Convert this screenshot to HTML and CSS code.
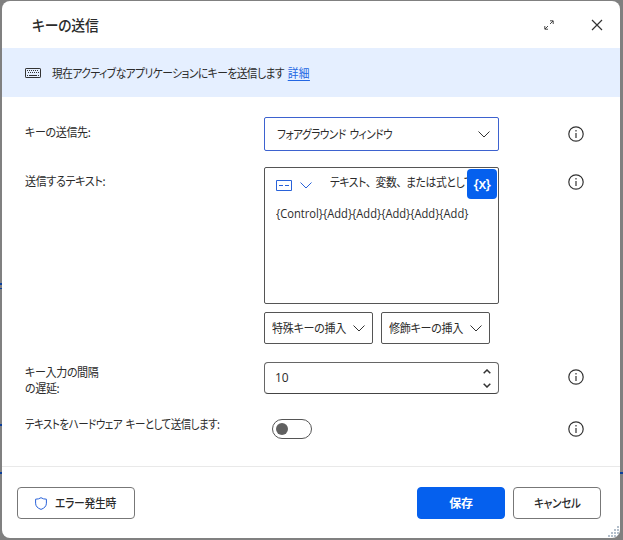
FILE: index.html
```html
<!DOCTYPE html>
<html lang="ja">

<head>
    <meta charset="utf-8">
    <title>キーの送信</title>
    <meta name="viewport" content="width=device-width, initial-scale=1">
    <link rel="stylesheet" href="styles.css">
</head>

<body>
    <!-- bits of the designer behind the dialog -->
    <i class="behind b1"></i>
    <i class="behind b2"></i>
    <i class="behind b3"></i>
    <i class="behind b4"></i>
    <i class="behind b5"></i>

    <div class="dialog">
        <header class="titlebar">
            <h1>キーの送信</h1>
            <svg class="expand" width="10" height="10" viewBox="0 0 10 10"><path d="M6 .8h3.2V4M9 1 6 4M.8 6v3.2H4M1 9l3-3"/></svg>
            <svg class="close" width="12" height="12" viewBox="0 0 12 12"><path d="M1 1l10 10M11 1 1 11"/></svg>
        </header>

        <div class="banner">
            <svg width="16" height="10" viewBox="0 0 16 10"><rect x=".5" y=".5" width="15" height="9" rx=".6"/><path d="M2 2.5h12M3 4.5h11" stroke-dasharray="1 1"/><path d="M2 7.5h1M4 7.5h8M13 7.5h1"/></svg>
            <p>現在アクティブなアプリケーションにキーを送信します<a href="#">詳細</a></p>
        </div>

        <main>
            <div class="row row-target">
                <label class="l-target">キーの送信先:</label>
                <div class="select">
                    <span>フォアグラウンド <span class="word">ウィンドウ</span></span>
                    <svg class="chev" width="12" height="7" viewBox="0 0 12 7"><path d="M.5.5 6 6 11.5.5"/></svg>
                </div>
                <svg class="info" width="16" height="16" viewBox="0 0 16 16"><circle cx="8" cy="8" r="7.2"/><path d="M8 4v1.6M8 7v5"/></svg>
            </div>

            <div class="row row-text">
                <label class="l-text">送信するテキスト:</label>
                <div>
                    <div class="textbox">
                        <div class="tools">
                            <svg width="16" height="11" viewBox="0 0 16 11"><path d="M.5.5h15v10H.5zM3 5.5h4M9 5.5h4"/></svg>
                            <svg class="tool-chev" width="12" height="7" viewBox="0 0 12 7"><path d="M.5.5 6 6 11.5.5"/></svg>
                            <div class="hint"><span>テキスト<b>、</b>変数<b>、</b>または式として</span></div>
                            <button class="var">{x}</button>
                        </div>
                        <p class="value">{Control}{Add}{Add}{Add}{Add}{Add}</p>
                    </div>
                    <div class="inserts">
                        <button><span>特殊キーの挿入</span><svg class="chev" width="12" height="7" viewBox="0 0 12 7"><path d="M.5.5 6 6 11.5.5"/></svg></button>
                        <button><span>修飾キーの挿入</span><svg class="chev" width="12" height="7" viewBox="0 0 12 7"><path d="M.5.5 6 6 11.5.5"/></svg></button>
                    </div>
                </div>
                <svg class="info" width="16" height="16" viewBox="0 0 16 16"><circle cx="8" cy="8" r="7.2"/><path d="M8 4v1.6M8 7v5"/></svg>
            </div>

            <div class="row row-delay">
                <label class="l-delay">キー入力の間隔<br>の遅延:</label>
                <div class="number">
                    <span>10</span>
                    <div class="spin">
                        <svg width="8" height="5" viewBox="0 0 8 5"><path d="M.7 4.3 4 1l3.3 3.3"/></svg>
                        <svg width="8" height="5" viewBox="0 0 8 5"><path d="M.7.7 4 4 7.3.7"/></svg>
                    </div>
                </div>
                <svg class="info" width="16" height="16" viewBox="0 0 16 16"><circle cx="8" cy="8" r="7.2"/><path d="M8 4v1.6M8 7v5"/></svg>
            </div>

            <div class="row row-hard">
                <label class="l-hard">テキストをハードウェア <span class="word">キーとして送信します:</span></label>
                <div class="toggle"></div>
                <svg class="info" width="16" height="16" viewBox="0 0 16 16"><circle cx="8" cy="8" r="7.2"/><path d="M8 4v1.6M8 7v5"/></svg>
            </div>
        </main>

        <footer>
            <button class="btn on-error">
                <svg width="12" height="13" viewBox="0 0 12 13"><path d="M6 .7C4.600 1.700 2.800 2.200.6 2.200v4c0 3 2 5 5.400 6.200 3.400-1.200 5.400-3.200 5.400-6.200v-4C9.200 2.200 7.400 1.700 6 .7z"/></svg>
                <span>エラー発生時</span>
            </button>
            <button class="btn save">保存</button>
            <button class="btn cancel"><span>キャンセル</span></button>
        </footer>
        <svg class="grip" width="12" height="12" viewBox="0 0 12 12"><path d="M9 1h2M6 4h2M9 4h2M3 7h2M6 7h2M9 7h2M0 10h2M3 10h2M6 10h2M9 10h2"/></svg>
    </div>
</body>

</html>
```
FILE: styles.css
```css
* {
    box-sizing: border-box;
}

body {
    margin: 0;
    height: 540px;
    padding: 1px 3px 2px 2px;
    overflow: hidden;
    background: #808080;
    color: #2b2b2b;
    font: 12px/16px "Open Sans", "Noto Sans CJK JP", sans-serif;
    font-feature-settings: "palt";
}

h1, p {
    margin: 0;
}

button {
    font: inherit;
    color: inherit;
    font-feature-settings: inherit;
    letter-spacing: inherit;
    padding: 0;
    background: #fff;
}

svg {
    display: block;
    flex: none;
    fill: none;
    stroke: #333;
}

h1, label, .banner, .select, .hint, .inserts, .on-error, .save, .cancel {
    font-family: "Noto Sans CJK JP", sans-serif;
    white-space: nowrap;
}

/* narrow UI lettering */
h1, label, .banner p, .select > span, .hint span, .value, .inserts span, .on-error span {
    transform: scaleX(.92);
    transform-origin: left;
}

.word {
    margin-left: 2px;
}

.behind {
    position: absolute;
    left: 0;
    width: 2px;
    height: 2px;
    background: #0b3f9c;
}

.b1 { top: 283px; }
.b2 { top: 288px; height: 1px; }
.b3 { top: 424px; }
.b4 { top: 472px; }
.b5 { top: 472px; left: 620px; width: 3px; }

.dialog {
    position: relative;
    height: 537px;
    display: flex;
    flex-direction: column;
    background: #fff;
    border-radius: 8px;
    overflow: hidden;
}

.titlebar {
    display: flex;
    align-items: center;
    height: 47px;
    padding: 0 17px 0 30px;
}

h1 {
    flex: 1;
    font-size: 15px;
    line-height: 20px;
    font-weight: 500;
    letter-spacing: -0.2px;
}

.expand {
    margin-right: 37px;
    stroke-width: .9;
}

.close {
    stroke-width: 1.2;
}

.banner {
    display: flex;
    align-items: center;
    height: 49px;
    padding-left: 23px;
    background: #e5efff;
}

.banner p {
    margin-left: 11px;
    letter-spacing: -0.6px;
    transform: scaleX(.895);
}

.banner a {
    margin-left: 4px;
    color: #2266e3;
    letter-spacing: 0.4px;
    text-underline-offset: 2px;
}

main {
    flex: 1;
    padding: 20px 0 0 23px;
}

.row {
    display: grid;
    grid-template-columns: 239px 235px 16px;
    align-items: start;
}

.info {
    margin-left: 69px;
    stroke-width: 1.2;
}

.row-target { height: 50px; }
.row-text { height: 195px; }
.row-delay { height: 57px; }

.row-target label { margin-top: 7px; }
.row-text label { margin-top: 6px; }
.row-delay label { margin-top: 2px; }
.row-hard label { margin-top: -3px; }
.row-target .info { margin-top: 9px; }
.row-text .info { margin-top: 7px; }
.row-delay .info { margin-top: 7px; }
.row-hard .info { margin-top: 2px; }

label {
    justify-self: start;
    letter-spacing: -0.4px;
}

.l-hard {
    letter-spacing: -0.6px;
    transform: scaleX(.875);
}

.select {
    display: flex;
    align-items: center;
    justify-content: space-between;
    height: 34px;
    padding: 0 8px 0 12px;
    border: 1px solid #3d62cf;
    border-radius: 2px;
    letter-spacing: -0.5px;
}

.select > span {
    transform: scaleX(.88);
}

.textbox {
    height: 137px;
    border: 1px solid #555;
    border-radius: 2px;
}

.tools {
    display: flex;
    align-items: center;
    height: 32px;
    padding: 0 1px 0 11px;
}

.tools svg {
    margin-top: 2px;
    stroke: #2962d9;
}

.tools .tool-chev {
    margin-left: 8px;
}

.hint {
    flex: 1;
    height: 20px;
    margin-left: 18px;
    overflow: hidden;
    letter-spacing: -0.4px;
}

.hint span {
    display: block;
    transform: scaleX(.9);
}

.hint b {
    margin-right: 5px;
    font-weight: 400;
}

.var {
    width: 30px;
    height: 30px;
    border: 0;
    border-radius: 4px;
    background: #0560ee;
    color: #fff;
    font-size: 14px;
    font-weight: 600;
    letter-spacing: -0.5px;
}

.value {
    margin: 6px 0 0 11px;
    transform: scaleX(.93);
}

.inserts {
    display: flex;
    gap: 8px;
    margin-top: 8px;
    letter-spacing: -0.3px;
}

.inserts button {
    display: flex;
    align-items: center;
    justify-content: space-between;
    width: 109px;
    height: 32px;
    padding: 0 7px;
    border: 1px solid #555;
    border-radius: 2px;
}

.number {
    display: flex;
    align-items: center;
    justify-content: space-between;
    height: 32px;
    padding: 0 7px 0 10px;
    border: 1px solid #666;
    border-bottom-color: #444;
    border-radius: 4px;
}

.spin {
    display: grid;
    gap: 9px;
}

.spin svg {
    stroke-width: 1.5;
}

.toggle {
    width: 40px;
    height: 20px;
    margin-left: 8px;
    padding: 3px;
    border: 1px solid #555;
    border-radius: 10px;
}

.toggle::before {
    content: "";
    display: block;
    width: 12px;
    height: 12px;
    border-radius: 50%;
    background: #606060;
}

footer {
    display: flex;
    gap: 8px;
    height: 72px;
    padding: 20px 19px 0 15px;
    border-top: 1px solid #e9e9e9;
}

.btn {
    display: flex;
    align-items: center;
    justify-content: center;
    width: 88px;
    height: 32px;
    border: 1px solid #777;
    border-radius: 4px;
    font-weight: 500;
    letter-spacing: -0.3px;
}

.on-error {
    justify-content: flex-start;
    width: 118px;
    gap: 8px;
    padding-left: 17px;
    margin-right: auto;
}

.on-error span {
    transform: scaleX(.9);
}

.on-error svg {
    stroke: #2962d9;
}

.save {
    border-color: #0560ee;
    background: #0560ee;
    color: #fff;
    font-weight: 700;
}

.cancel span {
    transform: scaleX(.88);
}

.grip {
    position: absolute;
    right: 0;
    bottom: 0;
    stroke: #9caabb;
    stroke-width: 1.5;
}
```
